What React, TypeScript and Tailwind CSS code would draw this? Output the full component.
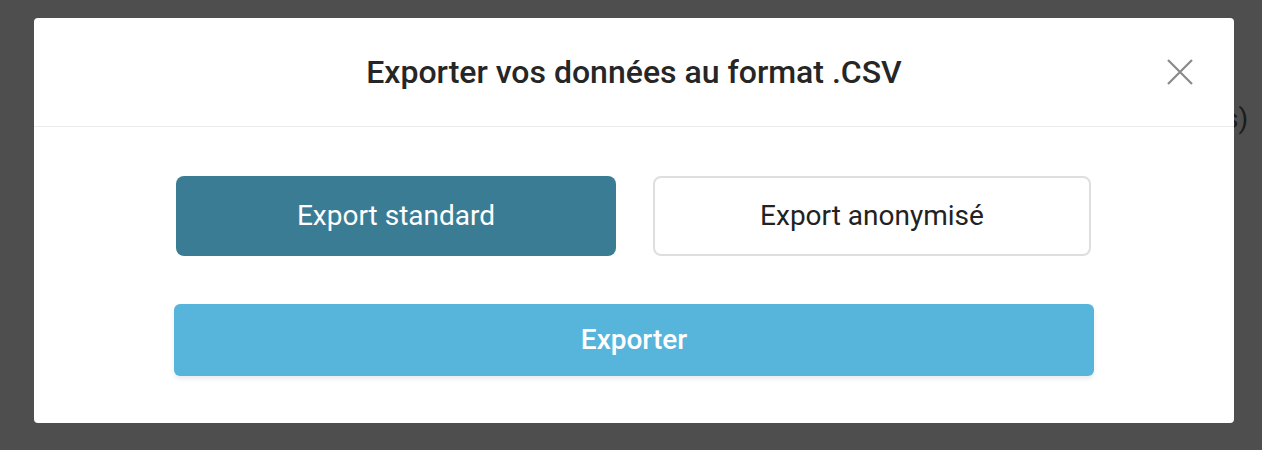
import React, { useState } from 'react';

type Mode = 'standard' | 'anonymous';

const CloseIcon = () => (
  <svg width="26" height="26" viewBox="0 0 26 26" fill="none">
    <path d="M1 1 L25 25 M25 1 L1 25" stroke="#8a8a8a" strokeWidth="2.2" />
  </svg>
);

export default function App() {
  const [mode, setMode] = useState<Mode>('standard');

  const choiceClass = (m: Mode) =>
    mode === m ? 'bg-[#3b7c95] text-white' : 'border-2 border-[#dedede] bg-white text-[#222]';

  return (
    <div className="relative h-[450px] w-full overflow-hidden bg-[#4e4e4e] font-['Roboto',sans-serif]">
      {/* page text peeking out from behind the modal */}
      <span className="absolute left-[1224px] top-[98px] text-[28px] text-[#1c1c1c]">s)</span>

      <div className="relative ml-[34px] mt-[18px] w-[1200px] rounded-[4px] bg-white">
        <div className="relative flex h-[109px] items-center justify-center border-b border-[#ececec]">
          <h2 className="text-[32px] font-medium text-[#262626]">Exporter vos données au format .CSV</h2>
          <button className="absolute right-[41px] top-[41px]">
            <CloseIcon />
          </button>
        </div>

        <div className="px-[140px] pb-[47px] pt-[49px]">
          <div className="flex gap-[37px] pl-[2px]">
            <button
              onClick={() => setMode('standard')}
              className={`h-[80px] w-[440px] rounded-[8px] text-[28px] ${choiceClass('standard')}`}
            >
              Export standard
            </button>
            <button
              onClick={() => setMode('anonymous')}
              className={`h-[80px] w-[438px] rounded-[8px] text-[28px] ${choiceClass('anonymous')}`}
            >
              Export anonymisé
            </button>
          </div>

          <button className="mt-[48px] h-[72px] w-full rounded-[6px] bg-[#57b5dc] text-[28px] font-medium text-white shadow-[0_3px_4px_rgba(0,0,0,0.08)]">
            Exporter
          </button>
        </div>
      </div>
    </div>
  );
}
